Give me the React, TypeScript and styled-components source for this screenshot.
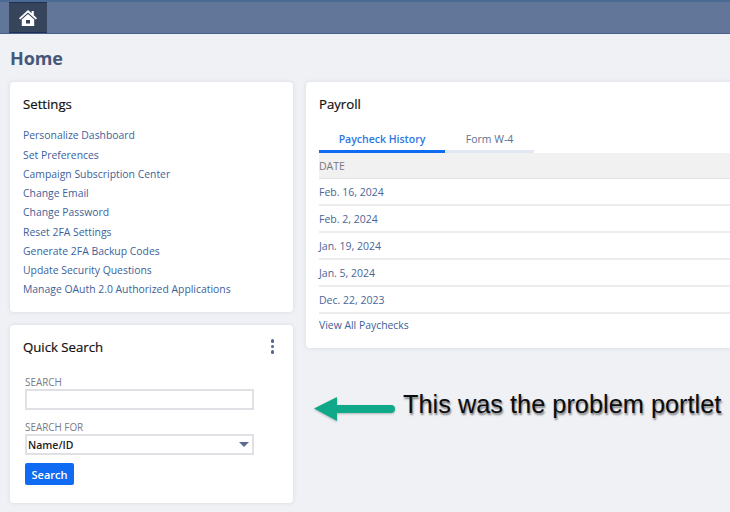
import React from 'react';
import styled, { createGlobalStyle } from 'styled-components';

const Global = createGlobalStyle`
  html, body { margin: 0; padding: 0; width: 730px; height: 512px; overflow: hidden; background: #eff1f5; }
  * { box-sizing: border-box; }
  body { font-family: "Open Sans", sans-serif; }
`;
const Page = styled.div`width: 730px; height: 512px; overflow: hidden; position: relative;`;
const TopBar = styled.header`
  height: 34px; background: #62769a; border-top: 2px solid #4a6a94; border-bottom: 1px solid #46618a;
  padding-left: 9px; display: flex;
`;
const HomeTab = styled.div`
  width: 38px; height: 31px; background: #36445c; display: flex; align-items: center; justify-content: center;
  border-top: 1px solid #232f52; border-bottom: 1px solid #232f52;
`;
const Content = styled.main`padding: 0 0 0 10px; width: 760px;`;
const Title = styled.h1`
  margin: 14px 0 13px 0; font-size: 18px; line-height: 21px; font-weight: 700; color: #46587a; letter-spacing: -.1px;
`;
const Columns = styled.div`display: grid; grid-template-columns: 283px 1fr; column-gap: 13px; align-items: start;`;
const Stack = styled.div`display: flex; flex-direction: column; gap: 13px;`;
const Card = styled.section<{ $h: number }>`
  height: ${p => p.$h}px; background: #fff; border-radius: 4px; padding: 0 13px;
  box-shadow: 0 0 4px rgba(90,100,125,.16);
`;
const CardHead = styled.div`display: flex; justify-content: space-between; align-items: center; height: 43px;`;
const CardTitle = styled.h2`margin: 0; font-size: 13.2px; font-weight: 400; color: #111; -webkit-text-stroke: .2px #111;`;
const LinkList = styled.div`display: flex; flex-direction: column; margin-top: 1.4px;`;
const Lnk = styled.a`font-size: 10.4px; line-height: 19.25px; color: #3e5f9a; white-space: nowrap;`;
const Dots = styled.div`
  display: flex; flex-direction: column; gap: 2px; margin-right: 6px;
  i { width: 3.5px; height: 3.5px; border-radius: 50%; background: #52658a; display: block; }
`;
const Form = styled.form`padding: 9px 0 0 2px; width: 231px;`;
const Label = styled.label`display: block; font-size: 9.9px; line-height: 11px; color: #7a7a80;`;
const TextBox = styled.div`height: 21px; border: 2px solid #e0e1e4; background: #fff; margin: 1px 0 12px;`;
const SelectBox = styled.div`
  height: 21px; border: 2px solid #e0e1e4; background: #fff; margin: 1px 0 8px;
  display: flex; align-items: center; justify-content: space-between; padding: 0 3px 0 1px;
  font-size: 10.5px; color: #1c1c1c; font-weight: 600;
`;
const Caret = styled.span`
  width: 0; height: 0; border-left: 5.5px solid transparent; border-right: 5.5px solid transparent; border-top: 5.5px solid #5a6c90;
`;
const SearchBtn = styled.button`
  display: block; width: 49px; height: 22px; border: 0; border-radius: 2px; padding: 0; background: #0f6cf2; color: #fff;
  font: 600 11px "Open Sans", sans-serif;
`;
const Tabs = styled.div`display: flex; margin-top: 3px; height: 25px;`;
const Tab = styled.div<{ $active?: boolean; $w: number }>`
  width: ${p => p.$w}px; height: 25px; text-align: center; font-size: 10.5px; line-height: 22px;
  color: ${p => p.$active ? '#2a77e6' : '#5d6f90'}; font-weight: ${p => p.$active ? 600 : 400};
  border-bottom: 3px solid ${p => p.$active ? '#0f6cf2' : '#e2e8f1'};
`;
const TableHead = styled.div`
  height: 26px; background: #f1f1f2; font-size: 10.5px; line-height: 26px; color: #77777c;
  border-bottom: 1px solid #e4e4e6;
`;
const Row = styled.div`height: 27px; border-bottom: 2px solid #ececee; font-size: 10.5px; line-height: 27px; color: #4a6596;`;
const ViewAll = styled.a`display: block; font-size: 10.4px; line-height: 22px; color: #3e5f9a;`;
const Note = styled.div`
  position: absolute; left: 403px; top: 388px; font: 25.35px/32px "Liberation Sans", sans-serif; color: #0c0c0c; white-space: nowrap;
  text-shadow: 1px 2px 2px rgba(0,0,0,.5);
`;
const Arrow = styled.svg`position: absolute; left: 312px; top: 396px; overflow: visible; filter: drop-shadow(0 1px 1px rgba(0,0,0,.25));`;

const links = ['Personalize Dashboard','Set Preferences','Campaign Subscription Center','Change Email','Change Password','Reset 2FA Settings','Generate 2FA Backup Codes','Update Security Questions','Manage OAuth 2.0 Authorized Applications'];
const dates = ['Feb. 16, 2024','Feb. 2, 2024','Jan. 19, 2024','Jan. 5, 2024','Dec. 22, 2023'];

export default function App() {
  return (
    <Page>
      <Global />
      <TopBar>
        <HomeTab>
          <svg width="20" height="18" viewBox="0 0 20 18">
            <path d="M10 1 L1 9.2 L2.3 10.4 L10 3.6 L17.7 10.4 L19 9.2 L15.8 6.3 V2 H13.6 V4.3 Z" fill="#fff" />
            <path fillRule="evenodd" d="M10 5 L3.8 10.5 V17 H16.2 V10.5 Z M8 11 H12 V14.5 H8 Z" fill="#fff" />
          </svg>
        </HomeTab>
      </TopBar>
      <Content>
        <Title>Home</Title>
        <Columns>
          <Stack>
            <Card $h={230}>
              <CardHead><CardTitle>Settings</CardTitle></CardHead>
              <LinkList>{links.map(l => <Lnk key={l}>{l}</Lnk>)}</LinkList>
            </Card>
            <Card $h={178}>
              <CardHead><CardTitle>Quick Search</CardTitle><Dots><i /><i /><i /></Dots></CardHead>
              <Form>
                <Label>SEARCH</Label>
                <TextBox />
                <Label>SEARCH FOR</Label>
                <SelectBox>Name/ID<Caret /></SelectBox>
                <SearchBtn type="button">Search</SearchBtn>
              </Form>
            </Card>
          </Stack>
          <Card $h={266}>
            <CardHead><CardTitle>Payroll</CardTitle></CardHead>
            <Tabs>
              <Tab $active $w={126}>Paycheck History</Tab>
              <Tab $w={89}>Form W-4</Tab>
            </Tabs>
            <TableHead>DATE</TableHead>
            {dates.map(d => <Row key={d}>{d}</Row>)}
            <ViewAll>View All Paychecks</ViewAll>
          </Card>
        </Columns>
      </Content>
      <Arrow width="84" height="26" viewBox="0 0 84 26">
        <path d="M2 12.5 L25 1 V9 H79 Q83 9 83 13 Q83 17 79 17 H25 V25 Z" fill="#0fa98a" />
      </Arrow>
      <Note>This was the problem portlet</Note>
    </Page>
  );
}
